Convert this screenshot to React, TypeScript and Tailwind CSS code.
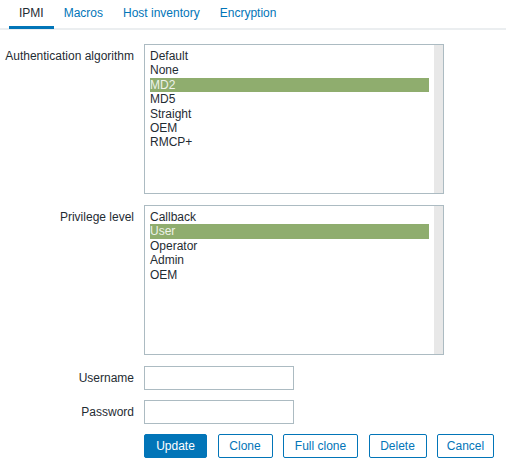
import React from "react";

const font = { fontFamily: '"Liberation Sans", Arial, sans-serif' };

function ListBox({ items, selected }: { items: string[]; selected: string }) {
  return (
    <div className="flex w-[300px] h-[150px] border border-[#acbbc2] bg-white">
      <div className="flex-1 pl-[5px] pr-[5px] pt-[4px]">
        {items.map((it) => (
          <div
            key={it}
            className={
              "h-[14.4px] leading-[14.4px] whitespace-nowrap " +
              (it === selected ? "bg-[#8fad6e] text-[#eef3ea]" : "text-[#1f2c33]")
            }
          >
            {it}
          </div>
        ))}
      </div>
      <div className="w-[9px] bg-[#e8e8e8]" />
    </div>
  );
}

function Label({ children }: { children: React.ReactNode }) {
  return (
    <div className="w-[144px] shrink-0 pr-[10px] pt-[5px] text-right leading-[14px] text-[#1f2c33]">
      {children}
    </div>
  );
}

export default function App() {
  const tabs = ["IPMI", "Macros", "Host inventory", "Encryption"];
  const secondary = [
    { t: "Clone", w: "w-[55px]" },
    { t: "Full clone", w: "w-[75px]" },
    { t: "Delete", w: "w-[58px]" },
    { t: "Cancel", w: "w-[57px]" },
  ];
  return (
    <div style={font} className="w-[506px] h-[463px] bg-white text-[12px] overflow-hidden">
      <div className="flex h-[30px] border-b-2 border-[#ebeef0] pl-[9px]">
        {tabs.map((t, i) => (
          <div
            key={t}
            className={
              "relative px-[10px] pt-[6px] leading-[14px] " +
              (i === 0 ? "text-[#1f2c33]" : "text-[#0275b8]")
            }
          >
            {t}
            {i === 0 && (
              <span className="absolute left-0 right-0 bottom-[-1px] h-[3px] bg-[#0275b8]" />
            )}
          </div>
        ))}
      </div>

      <div className="pt-[14px]">
        <div className="flex">
          <Label>Authentication algorithm</Label>
          <ListBox
            items={["Default", "None", "MD2", "MD5", "Straight", "OEM", "RMCP+"]}
            selected="MD2"
          />
        </div>
        <div className="flex mt-[11px]">
          <Label>Privilege level</Label>
          <ListBox items={["Callback", "User", "Operator", "Admin", "OEM"]} selected="User" />
        </div>
        <div className="flex mt-[11px]">
          <Label>Username</Label>
          <div className="w-[150px] h-[24px] border border-[#acbbc2] bg-white" />
        </div>
        <div className="flex mt-[10px]">
          <Label>Password</Label>
          <div className="w-[150px] h-[24px] border border-[#acbbc2] bg-white" />
        </div>
        <div className="flex mt-[10px] pl-[144px] gap-[10.5px]">
          <div className="w-[63px] h-[24px] flex items-center justify-center border border-[#0275b8] bg-[#0275b8] text-white rounded-[2px] whitespace-nowrap">
            Update
          </div>
          {secondary.map((b) => (
            <div
              key={b.t}
              className={
                b.w +
                " h-[24px] flex items-center justify-center border border-[#0275b8] bg-white text-[#0275b8] rounded-[2px] whitespace-nowrap"
              }
            >
              {b.t}
            </div>
          ))}
        </div>
      </div>
    </div>
  );
}
